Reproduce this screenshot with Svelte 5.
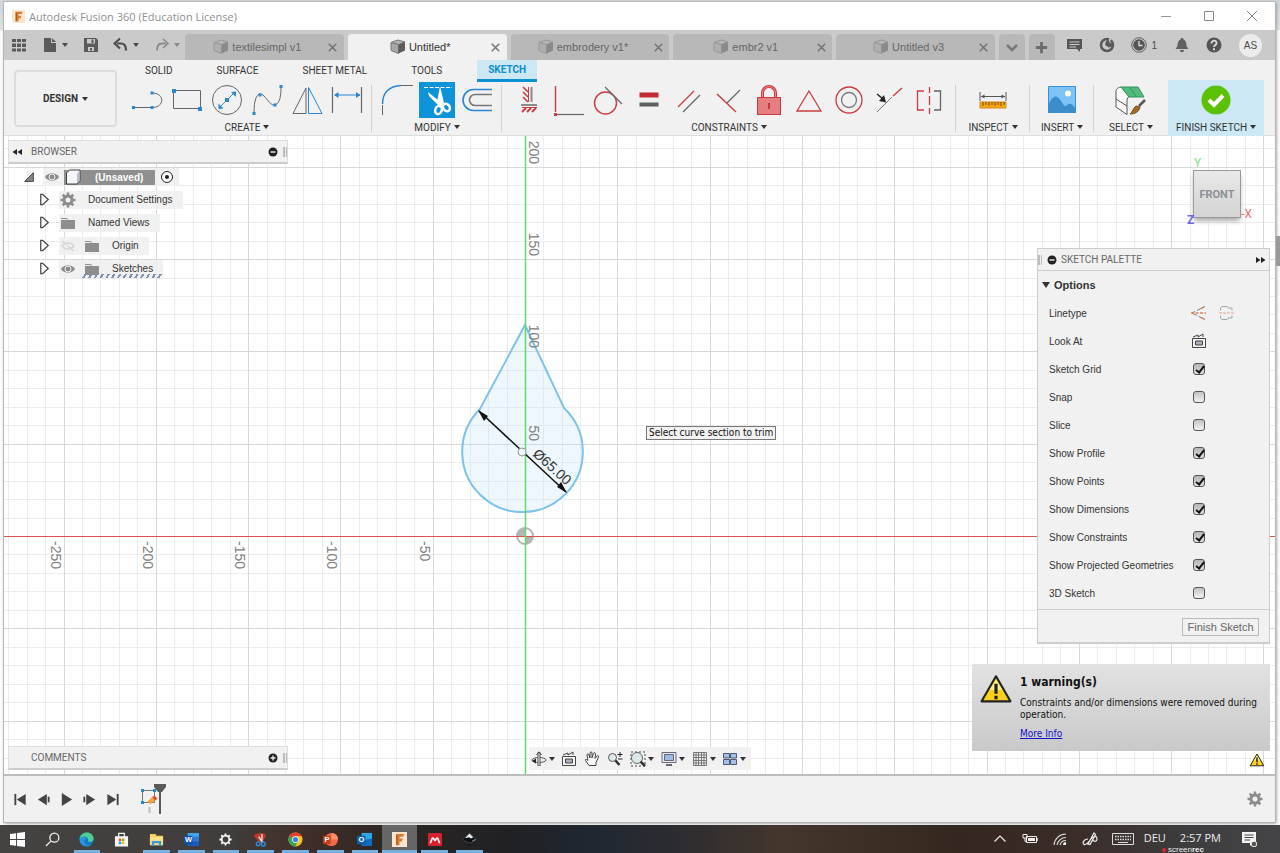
<script lang="ts">
  const B = '#2a86d1';
  const R = '#cc3b3f';
  const G = '#666';

  // inner markup per icon, drawn on a 16 or 34 unit box
  const icons: Record<string, string> = {
    line: `<path d="M3.500 24.500H22M22 10c13 0 13 14.500 0 14.500" stroke="${G}"/><path d="M2 23h3v3H2zM20.500 23h3v3h-3zM20.500 8.500h3v3h-3z" fill="${B}"/>`,
    rect: `<path d="M3.500 7.500H30.500V25.500H3.500z" stroke="${G}"/><path d="M2 6h4v4H2zM28 24h4v4h-4z" fill="${B}"/>`,
    circle: `<circle cx="17" cy="17" r="14.500" stroke="${G}"/><path d="M10 24L24 10" stroke="${B}"/><path d="M8.500 26v-5.500l5 5zM26 8.500v5.500l-5-5zM15 15h4v4h-4z" fill="${B}"/>`,
    spline: `<path d="M4 30C4 12 9 8 14 13C18 17 21 23 25 22C30 20 31 13 31 4" stroke="${G}"/><path d="M2.500 29h3v3h-3zM8.500 10.500h3v3h-3zM23.500 20.500h3v3h-3zM29.500 2h3v3h-3z" fill="${B}"/>`,
    mirror: `<path d="M3 30.500L16 5V30.500z" stroke="${G}"/><path d="M18.500 4.500V30.500H32z" stroke="${B}"/>`,
    dim: `<path d="M2.500 4V30M31.500 4V30" stroke="${G}" stroke-width="1.200"/><path d="M5 12H30" stroke="${B}"/><path d="M4 12l4.500-3v6zM30.500 12l-4.500-3v6z" fill="${B}"/>`,
    fillet: `<path d="M2.500 21C2.500 10 9 3 21 2.500" stroke="${B}" stroke-width="1.500"/><path d="M2.500 22V32M21 2.500H33" stroke="${G}"/>`,
    trim: `<path d="M4 4.500H32" stroke="#fff" stroke-dasharray="4 1.500"/><path d="M20 3L24 20L21 22L17 19zM8 9L24 22L20 25L17 21L9 13z" fill="#fff"/><g stroke="#fff" stroke-width="2.500"><ellipse cx="18.500" cy="27" rx="3.200" ry="4.200" transform="rotate(20 18.500 27)"/><ellipse cx="26.500" cy="24.500" rx="3.200" ry="4" transform="rotate(-35 26.500 24.500)"/></g>`,
    offset: `<path d="M32 6.500H13.500a10.500 10.500 0 0 0 0 21H32" stroke="${B}" stroke-width="1.600"/><path d="M32 11.500H15a5.500 5.500 0 0 0 0 11H32" stroke="#777" stroke-width="1.600"/>`,
    hv: `<path d="M16.500 4V19M10 24.500H25" stroke="${R}"/><path d="M11 4l5 5M11 9l5 5M11 14l5 5" stroke="${R}" stroke-width="1.600"/><path d="M19.500 4V19M9 22H25" stroke="#8a8a8a" stroke-width="2"/><path d="M14 25l-4 4M19 25l-4 4M24 25l-4 4" stroke="${R}" stroke-width="1.800"/>`,
    coincident: `<path d="M3.500 3V29" stroke="${R}" stroke-width="1.400"/><path d="M5 31.500H32" stroke="${G}" stroke-width="1.200"/><path d="M2 30h3v3H2z" fill="${R}"/>`,
    tangent: `<circle cx="13.500" cy="20" r="11" stroke="${R}" stroke-width="1.400"/><path d="M13 4L30 21" stroke="${G}" stroke-width="1.200"/>`,
    equal: `<path d="M7.500 12H26.500" stroke="#c32a2f" stroke-width="5"/><path d="M7.500 21.500H26.500" stroke="#5f5f5f" stroke-width="4"/>`,
    parallel: `<path d="M6 24L22 8" stroke="${R}" stroke-width="1.300"/><path d="M11 29L28 12" stroke="${G}" stroke-width="1.200"/>`,
    perp: `<path d="M5 11L24 29" stroke="${R}" stroke-width="1.400"/><path d="M15 20L28 7" stroke="${G}" stroke-width="1.200"/>`,
    lock: `<path d="M10.500 16V10a6.500 6.500 0 0 1 13 0V16" stroke="#d0383d" stroke-width="3"/><path d="M10.500 16V10a6.500 6.500 0 0 1 13 0V16" stroke="#e78a8c"/><rect x="5.500" y="14.500" width="23" height="17" fill="#e37f81" stroke="#c8383c"/><path d="M17 20V26" stroke="#c01f24" stroke-width="1.500"/>`,
    triangle: `<path d="M17 8L29 28H5z" stroke="${R}" stroke-width="1.300"/>`,
    concentric: `<circle cx="17" cy="17" r="13" stroke="${R}" stroke-width="1.300"/><circle cx="17" cy="17" r="7.500" stroke="#777a85" stroke-width="1.300"/>`,
    midpoint: `<path d="M5 29L20 14" stroke="#777"/><path d="M21 13L30 5" stroke="${R}" stroke-width="1.300"/><path d="M5 11l6 5" stroke="#222" stroke-width="1.500"/><path d="M14 19.500l-2-7.500-5 6z" fill="#222"/>`,
    symmetry: `<path d="M12 8H5.500V27H12" stroke="${R}" stroke-width="1.300"/><path d="M17.500 4V10M17.500 13V22M17.500 25V31" stroke="${R}" stroke-width="1.300"/><path d="M22 8H28.500V27H22" stroke="${G}" stroke-width="1.300"/>`,
    inspect: `<path d="M4 9V18M30 9V18M5 13.500H29" stroke="#555"/><path d="M5 13.500l3.500-2v4zM29 13.500l-3.500-2v4z" fill="#555"/><path d="M4 19H30V25H4z" fill="#f5a81c" stroke="#d98c12"/><path d="M7 19v4M10 19v3M13 19v4M16 19v3M19 19v4M22 19v3M25 19v4M28 19v3" stroke="#7a4a00"/>`,
    insert: `<path d="M3.500 3.500H30.500V29.500H3.500z" fill="#7cc3f7" stroke="#3f8fcf"/><path d="M3 22C9 11 12 11 18 21C20 25 21 22 24 21C27 20 29 24 31 26V30H3z" fill="#3b8dcb"/><circle cx="23" cy="10.500" r="3" fill="#fffde0"/>`,
    select: `<path d="M7 4C3 5 2 6 2 9V24L13 31.500V18C13 15 14 14 15 14" fill="#fbfbfb" stroke="#555"/><path d="M2 16l11 7" stroke="#555"/><path d="M7 4H24L30 14H15z" fill="#52bb7b" stroke="#2f9659"/><path d="M15.500 4L22.500 14" stroke="#2f9659"/><path d="M31 17L25 23" stroke="#555" stroke-width="2.500"/><path d="M26 24c-1 5-5 7-10 7c3-2 3-6 6-8z" fill="#a56a2c" stroke="#7a4a18"/>`,
    finish: `<circle cx="17" cy="17" r="14.500" fill="#5cc100"/><path d="M10 17l5 5 9-9.500" stroke="#fff" stroke-width="4"/>`,
    cube: `<path d="M1 3.500L8 1L15 3L8.500 5.500z" fill="#b5b5b5" stroke="#777"/><path d="M1 3.500L8.500 5.500V14.500L1 11.500z" fill="#a8a8a8" stroke="#777"/><path d="M8.500 5.500L15 3V11.500L8.500 14.500z" fill="#5d5d5d"/>`,
    apps: `<path d="M1 2h4v3H1zM6 2h4v3H6zM11 2h4v3h-4zM1 6.500h4v3.500H1zM6 6.500h4v3.500H6zM11 6.500h4v3.500h-4zM1 11.500h4v3H1zM6 11.500h4v3H6zM11 11.500h4v3h-4z" fill="#5a5a5a"/>`,
    file: `<path d="M2 1H9V6H14V15H2zM10 1L14 5H10z" fill="#5a5a5a"/>`,
    save: `<path d="M1 1H13L15 3V15H1z" fill="#5a5a5a"/><path d="M4 2H12V6.500H4zM5 10H11V14H5z" fill="#c9c9c9"/><path d="M8.500 2.500h2V6h-2zM7 11h2v2.500H7z" fill="#5a5a5a"/>`,
    undo: `<path d="M4 6.500H8c4 0 5 3 5 7" stroke="currentColor" stroke-width="2.200"/><path d="M7 1.500L1.500 6.500L7 11.500" stroke="currentColor" stroke-width="2"/>`,
    redo: `<path d="M12 6.500H8c-4 0-5 3-5 7" stroke="currentColor" stroke-width="1.800"/><path d="M9 2L14 6.500L9 11" stroke="currentColor" stroke-width="1.600"/>`,
    close: `<path d="M4 4l8 8M12 4l-8 8" stroke="#707070" stroke-width="1.500"/>`,
    down: `<path d="M3 6l5 5 5-5" stroke="#777" stroke-width="2.500"/>`,
    plus: `<path d="M8 2V14M2 8H14" stroke="#6c6c6c" stroke-width="3"/>`,
    chat: `<path d="M1 2H16V12H14V15L11 12H1z" fill="#555"/><path d="M3.500 5H13.500M3.500 7.500H13.500M3.500 10H10" stroke="#ccc"/>`,
    extensions: `<circle cx="8" cy="8" r="6" stroke="#5a5a5a" stroke-width="2.500"/><path d="M8 6L13 0" stroke="#cacaca" stroke-width="2"/><path d="M6 8l1-4 3-2v3l2 1.500 2-1-1 4-3 1z" fill="#5a5a5a"/>`,
    clock: `<circle cx="8" cy="8" r="7.300" stroke="#606060"/><circle cx="8" cy="8" r="5.800" fill="#555"/><path d="M8 4V8.500H11.500" stroke="#ddd" stroke-width="1.300"/>`,
    bell: `<path d="M8 1c1 0 1.500.5 1.500 1.500C12 3.500 12.500 6 12.500 9L14.500 12H1.500L3.500 9c0-3 .5-5.500 3-6.500C6.500 1.500 7 1 8 1z" fill="#606060"/><path d="M6 13h4c0 3-4 3-4 0z" fill="#606060"/>`,
    help: `<circle cx="8" cy="8" r="7.500" fill="#555"/><path d="M5.500 6.500c0-4 5.500-3.500 5 0C10.500 8 8 8 8 10" stroke="#ddd" stroke-width="1.800"/><path d="M7 11.300h2v2H7z" fill="#ddd"/>`,
    eye: `<path d="M1 8C4 3 12 3 15 8C12 13 4 13 1 8z" fill="#8b8b8b"/><circle cx="8" cy="8" r="3" stroke="#f1f1f1"/>`,
    eyeoff: `<path d="M2 8C5 4 11 4 14 8C11 12 5 12 2 8zM2 3L14 13" stroke="#d5d5d5" stroke-width="1.500"/>`,
    folder: `<path d="M1 3H7L8 5H15V14H1z" fill="#8e8e8e"/><path d="M1 4.500H7" stroke="#eee"/>`,
    gear: `<circle cx="8" cy="8" r="4" stroke="#8c8c8c" stroke-width="3"/><path d="M8 .5V3M8 13V15.500M.5 8H3M13 8H15.500M2.700 2.700L4.500 4.500M11.500 11.500l1.800 1.800M2.700 13.300L4.500 11.500M11.500 4.500l1.800-1.800" stroke="#8c8c8c" stroke-width="2.500"/>`,
    component: `<path d="M1.500 4L4.500 1H15V11.500L12 15H1.500z" fill="#f4f6fa" stroke="#444"/><path d="M12 4.500l2.500-2.500v9l-2.500 3z" fill="#b9bec8"/>`,
    radio: `<circle cx="8" cy="8" r="5.500" stroke="#222" fill="#fff"/><circle cx="8" cy="8" r="2" fill="#222"/>`,
    expand: `<path d="M4 2.500H6L12 8L6 13.500H4z" fill="#fafafa" stroke="#444" stroke-width="1.300"/>`,
    expanded: `<path d="M3 13L13 3V13z" fill="#888" stroke="#333"/>`,
    minus: `<circle cx="8" cy="8" r="4.500" fill="#222"/><path d="M5.500 8H10.500" stroke="#eee" stroke-width="1.400"/>`,
    add: `<circle cx="8" cy="8" r="4.500" fill="#222"/><path d="M5.500 8H10.500M8 5.500V10.500" stroke="#eee" stroke-width="1.300"/>`,
    rewind: `<path d="M8 5V11L3.500 8zM13 5V11L8.500 8z" fill="#222"/>`,
    forward: `<path d="M3 5V11L7.500 8zM8 5V11L12.500 8z" fill="#222"/>`,
    construction: `<path d="M14 1.500L1 8L14 14.500" stroke="#777" stroke-dasharray="9 2"/><path d="M0 8H15M10 3.500l4-2M10 12.500l4 2" stroke="#d9824f" stroke-dasharray="3 1.500" stroke-width="1.300"/>`,
    centerline: `<path d="M2.500 5.500V3L4 1.500H9L10 3H14V5.500M2.500 10.500V13L4 14.500H9L10 13H14V10.500" stroke="#a5a5a5"/><path d="M1 8H16" stroke="#e3a58a" stroke-dasharray="3 1"/>`,
    lookat: `<path d="M1.500 5.500H14.500V14.500H1.500z" stroke="#444" fill="#f8f8f8"/><path d="M4.500 8H11.500V12H4.500z" stroke="#444" fill="#aab0bc"/><path d="M2 4L7 2V4L12 1V4" stroke="#444"/>`,
    orbit: `<ellipse cx="8" cy="9" rx="7" ry="2.500" stroke="#555"/><path d="M8 1.500V15" stroke="#444" stroke-width="3"/><path d="M8 2V14.500" stroke="#fff"/><path d="M5.500 4L8 .8L10.500 4" stroke="#444"/><path d="M1 10l4-2.500v5z" fill="#222"/>`,
    pan: `<path d="M5 14.500L1.500 9.500C1 8 2.500 8 4 9.500L3 4c0-1.500 1.500-1.500 2 0L6 7V2c0-1.500 2-1.500 2 0V7L9.500 2.500c.5-1.500 2-1 2 .5L11 7.500L13 5c1-1 2 0 1.500 1L12 11.500V14.500z" fill="#fafafa" stroke="#444"/>`,
    zoom: `<circle cx="5.500" cy="6.500" r="4" fill="#dce9ea" stroke="#555"/><path d="M8.500 9.500L12.500 14" stroke="#333" stroke-width="2.500"/><path d="M13 1V6M10.500 3.500H15.500M11 8H15.500" stroke="#222"/>`,
    zoomwin: `<path d="M1 1H15V15H1z" stroke="#444" stroke-dasharray="2 2"/><circle cx="7" cy="7" r="5.500" fill="#dce9ea" stroke="#666"/><path d="M10.500 10.500L15 15" stroke="#333" stroke-width="2.500"/>`,
    display: `<path d="M1 1.500H15V11.500H1z" fill="#e8eaf0" stroke="#667"/><path d="M3.500 3.500H12.500V9.500H3.500z" fill="#9dbbe8" stroke="#667"/><path d="M5 14H11" stroke="#667" stroke-width="2"/>`,
    grid: `<path d="M1.500 1.500H14.500V14.500H1.500zM4 1V15M6.500 1V15M9.500 1V15M12 1V15M1 4H15M1 6.500H15M1 9.500H15M1 12H15" stroke="#777"/>`,
    views: `<path d="M1.500 2.500H7.500V7H1.500zM8.500 2.500H14.500V7H8.500zM1.500 8.500H7.500V13.500H1.500zM8.500 8.500H14.500V13.500H8.500z" fill="#a9c0e6" stroke="#4a5a78"/>`,
    warn: `<path d="M8 2L14.800 13.800H1.200z" fill="#fbd01f" stroke="#222" stroke-linejoin="round"/><path d="M8 3.500L11 8.500H5z" fill="#fdf08a"/><path d="M8 5.500V10.200M8 11.200V12.800" stroke="#222" stroke-width="1.500"/>`,
    first: `<path d="M2.500 2V14" stroke="#444" stroke-width="2"/><path d="M13.500 2V14L4 8z" fill="#444"/>`,
    prev: `<path d="M11.500 2V14L2 8z" fill="#444"/><path d="M13.500 5V11" stroke="#444" stroke-width="2"/>`,
    play: `<path d="M3 1L14 8L3 15z" fill="#444"/>`,
    next: `<path d="M4.500 2V14L14 8z" fill="#444"/><path d="M2.500 5V11" stroke="#444" stroke-width="2"/>`,
    last: `<path d="M2.500 2V14L12 8z" fill="#444"/><path d="M13.500 2V14" stroke="#444" stroke-width="2"/>`,
    win: `<path d="M0 2.200L6.500 1.300V7.500H0zM7.500 1.100L16 0V7.500H7.500zM0 8.500H6.500V14.700L0 13.800zM7.500 8.500H16V16L7.500 14.900z" fill="#fff"/>`,
    search: `<circle cx="10" cy="6" r="4.800" stroke="#eee" stroke-width="1.400"/><path d="M6.500 9.500L1 15" stroke="#eee" stroke-width="1.400"/>`,
    edge: `<circle cx="8" cy="8" r="7.500" fill="#1479c9"/><path d="M.6 8C1 2 6 .5 9 .6c5 .4 7 5 6.500 7.400C15 11 10 11 9.500 9.500C11 7 8 4.500 5 5C2.500 5.500 1 7 .6 8z" fill="#4dcf8e"/><path d="M.6 7C3 4 8 4 9 7c-3-.5-4 2-3 4.500c1 2.500 4 3.500 7 2C9 17 .5 15.500.6 7z" fill="#2498df"/>`,
    store: `<path d="M1 4.500H15V15.500H1z" fill="#f5f5f5"/><path d="M5 5V1.500H11V5" stroke="#f5f5f5" stroke-width="1.300"/><path d="M5 7h2.700v2.700H5z" fill="#f05022"/><path d="M8.300 7H11v2.700H8.300z" fill="#7fba00"/><path d="M5 10.300h2.700V13H5z" fill="#00a4ef"/><path d="M8.300 10.300H11V13H8.300z" fill="#ffb900"/>`,
    explorer: `<path d="M1 2H7L8 4H15V14H1z" fill="#f8cf59"/><path d="M1 5.500H15V14H1z" fill="#fbdf86"/><path d="M3 15V9.500H13V15H10.500V12H5.500V15z" fill="#3f96d8"/>`,
    word: `<rect x="4" y="1" width="12" height="14" rx="1" fill="#2b7cd3"/><path d="M4 1H16V5H4z" fill="#41a5ee"/><path d="M4 10H16V15H4z" fill="#185abd"/><rect x="0" y="4" width="9" height="9" rx="1" fill="#1450a5"/><text x="1" y="11" font-size="8" font-weight="700" fill="#fff">W</text>`,
    settings: `<circle cx="8" cy="8" r="4" stroke="#fff" stroke-width="1.800"/><path d="M8 1.500V4M8 12V14.500M1.500 8H4M12 8H14.500M3.500 3.500L5 5M11 11l1.500 1.500M3.500 12.500L5 11M11 5l1.500-1.500" stroke="#fff" stroke-width="2"/>`,
    snip: `<path d="M1 4C3 0 13 0 14 4L10 11H7z" fill="#c23a25"/><path d="M9.500 2V10M6 5L10 11" stroke="#ddd" stroke-width="1.500"/><circle cx="5.500" cy="12.500" r="2" stroke="#2f8fd8" stroke-width="1.500"/><circle cx="11" cy="13" r="2" stroke="#2f8fd8" stroke-width="1.500"/>`,
    chrome: `<circle cx="8" cy="8" r="7.500" fill="#f3c51b"/><path d="M8 8L1.500 4.200A7.500 7.500 0 0 1 14.500 4.500H8z" fill="#e2412f"/><path d="M8 8L1.500 4.200A7.500 7.500 0 0 0 7.500 15.500L11 9.500z" fill="#31a552"/><circle cx="8" cy="8" r="3.600" fill="#fff"/><circle cx="8" cy="8" r="2.800" fill="#3f7de8"/>`,
    ppt: `<circle cx="9" cy="8" r="7" fill="#ed6c47"/><path d="M9 1a7 7 0 0 1 7 7H9z" fill="#ff8f6b"/><rect x="0" y="4" width="8" height="9" rx="1" fill="#c43e1c"/><text x="1.500" y="11" font-size="8" font-weight="700" fill="#fff">P</text>`,
    outlook: `<rect x="5" y="1" width="11" height="12" fill="#28a8ea"/><path d="M5 9l11-2v8H5z" fill="#0f6cbd"/><rect x="0" y="4" width="9" height="9" rx="1" fill="#0f5fa8"/><text x="1.500" y="11" font-size="8" font-weight="700" fill="#fff">O</text>`,
    fusion: `<rect width="16" height="16" fill="#fbe5d0"/><path d="M4.500 2H13L12 5H8V7H11.500L10.500 10H8V14H4.500z" fill="#e07b28"/><path d="M4.500 2L6 4V13L4.500 14z" fill="#a85a1c"/>`,
    mendeley: `<rect x="1" y="1" width="15" height="14" rx="1" fill="#d5202e"/><path d="M3 11.500c2 0 1.500-5 3-5S8 9 8.500 9S9.500 6.500 11 6.500s1 5 3 5" stroke="#fff" stroke-width="1.800"/>`,
    inkscape: `<path d="M8 1L15 8C15 9.500 11 9 11 10.500S8 12 6 11S2 9.500 1 8z" fill="#0b0d12" stroke="#666" stroke-width=".6"/><path d="M8 1.500L12 5.500L9.500 7L7.500 5.500L4.500 6.500L3.500 6z" fill="#e6eef2"/><path d="M11 9.500L14.500 8" stroke="#8fa6b5"/><path d="M6 13.500C8 12.500 10 13.500 8 14.500z" fill="#0b0d12"/>`,
    chevron: `<path d="M2.500 10.500L8 5L13.500 10.500" stroke="#eee" stroke-width="1.200"/>`,
    battery: `<path d="M4.500 5.500H14.500V11.500H4.500z" stroke="#eee"/><path d="M6 7H13V10H6z" fill="#eee"/><path d="M15 7V10" stroke="#eee" stroke-width="1.500"/><path d="M1 3.500H5V7H1zM3 7V10.500H4.500" stroke="#eee"/>`,
    wifi: `<path d="M2 14A12 12 0 0 1 14 3M5 14A9 9 0 0 1 14 6.500M8 14a6 6 0 0 1 6-4.500" stroke="#ddd" stroke-width="1.100"/><path d="M11 14c0-2 1-3 3-3v3z" fill="#eee"/>`,
    pen: `<path d="M6 13L12 2L13.500 3.500L8 13.500zM6 8C2 8 0 12 2 13.500C4 14.500 6 12 9 8S15 5 15 8s-3 3-4 1" stroke="#eee" stroke-width="1.200"/>`,
    note: `<path d="M1 1H15V12H12L9 15V12H1z" fill="#f2f2f2"/><path d="M3.500 4H12.500M3.500 6.500H12.500M3.500 9H9" stroke="#444"/><circle cx="13" cy="13" r="2.800" fill="#555" stroke="#eee"/>`,
  };

  const tabs = [
    { id: 1, name: 'textilesimpl v1' },
    { id: 2, name: 'Untitled*' },
    { id: 3, name: 'embrodery v1*' },
    { id: 4, name: 'embr2 v1' },
    { id: 5, name: 'Untitled v3' },
  ];
  let activeTab = $state(2);

  const workspaces = ['SOLID', 'SURFACE', 'SHEET METAL', 'TOOLS', 'SKETCH'];
  let activeWorkspace = $state('SKETCH');

  const groups = [
    { name: 'CREATE', tools: ['line', 'rect', 'circle', 'spline', 'mirror', 'dim'] },
    { name: 'MODIFY', tools: ['fillet', 'trim', 'offset'] },
    {
      name: 'CONSTRAINTS',
      tools: ['hv', 'coincident', 'tangent', 'equal', 'parallel', 'perp', 'lock', 'triangle', 'concentric', 'midpoint', 'symmetry'],
    },
    { name: 'INSPECT', tools: ['inspect'] },
    { name: 'INSERT', tools: ['insert'] },
    { name: 'SELECT', tools: ['select'] },
    { name: 'FINISH SKETCH', tools: ['finish'] },
  ];
  let activeTool = $state('trim');

  const nodes = [
    { name: 'Document Settings', icons: ['gear'] },
    { name: 'Named Views', icons: ['folder'] },
    { name: 'Origin', icons: ['eyeoff', 'folder'] },
    { name: 'Sketches', icons: ['eye', 'folder'], marked: true },
  ];

  let options = $state([
    { id: 'grid', label: 'Sketch Grid', on: true },
    { id: 'snap', label: 'Snap', on: false },
    { id: 'slice', label: 'Slice', on: false },
    { id: 'profile', label: 'Show Profile', on: true },
    { id: 'points', label: 'Show Points', on: true },
    { id: 'dimensions', label: 'Show Dimensions', on: true },
    { id: 'constraints', label: 'Show Constraints', on: true },
    { id: 'projected', label: 'Show Projected Geometries', on: true },
    { id: 'sketch3d', label: '3D Sketch', on: false },
  ]);

  const nav = [
    { icon: 'orbit', menu: true },
    { icon: 'lookat', menu: false },
    { icon: 'pan', menu: false },
    { icon: 'zoom', menu: false },
    { icon: 'zoomwin', menu: true },
    { icon: 'display', menu: true },
    { icon: 'grid', menu: true },
    { icon: 'views', menu: true },
  ];

  const apps = [
    { icon: 'win', open: false },
    { icon: 'search', open: false },
    { icon: 'edge', open: true },
    { icon: 'store', open: false },
    { icon: 'explorer', open: true },
    { icon: 'word', open: true },
    { icon: 'settings', open: true },
    { icon: 'snip', open: true },
    { icon: 'chrome', open: true },
    { icon: 'ppt', open: true },
    { icon: 'outlook', open: true },
    { icon: 'fusion', open: true },
    { icon: 'mendeley', open: true },
    { icon: 'inkscape', open: true },
  ];

  // one grid cell is 10 mm
  const cell = 18.46;
  const steps = Array.from({ length: 201 }, (_, i) => i - 100);
  const xLabels = [-250, -200, -150, -100, -50];
  const yLabels = [50, 100, 150, 200];
  const pos = (n: number) => Math.round(n * cell);
</script>

{#snippet icon(name: string, size = 16, box = 16)}
  <svg width={size} height={size} viewBox="0 0 {box} {box}" fill="none" aria-hidden="true">{@html icons[name]}</svg>
{/snippet}

<div class="desktop">
  <div class="window">
    <header class="titlebar">
      {@render icon('fusion', 13)}
      <span>Autodesk Fusion 360 (Education License)</span>
      <div class="winbuttons">
        <button aria-label="Minimize"><svg width="12" height="12"><path d="M1 6.500H11" stroke="#999" /></svg></button>
        <button aria-label="Maximize"><svg width="12" height="12"><path d="M1.500 1.500H10.500V10.500H1.500z" fill="none" stroke="#888" /></svg></button>
        <button aria-label="Close"><svg width="12" height="12"><path d="M1 1L11 11M11 1L1 11" stroke="#888" /></svg></button>
      </div>
    </header>

    <div class="tabbar">
      <div class="quick">
        <button aria-label="Data panel">{@render icon('apps')}</button>
        <button aria-label="File">{@render icon('file')}<i class="caret"></i></button>
        <button aria-label="Save">{@render icon('save')}</button>
        <button aria-label="Undo">{@render icon('undo')}<i class="caret"></i></button>
        <button aria-label="Redo" class="dim">{@render icon('redo')}<i class="caret"></i></button>
      </div>
      <div class="tabs">
        {#each tabs as tab (tab.id)}
          <div class="tab" class:active={tab.id === activeTab}>
            <button class="tab-name" onclick={() => (activeTab = tab.id)}>
              {@render icon('cube')}
              {tab.name}
            </button>
            <button class="tab-close" aria-label="Close {tab.name}">{@render icon('close', 15)}</button>
          </div>
        {/each}
        <button class="tab small" aria-label="All tabs">{@render icon('down')}</button>
        <button class="tab small" aria-label="New tab">{@render icon('plus', 15)}</button>
      </div>
      <div class="account">
        <button aria-label="Comments">{@render icon('chat')}</button>
        <button aria-label="Extensions">{@render icon('extensions')}</button>
        <button aria-label="Job status" class="jobs">{@render icon('clock')}1</button>
        <button aria-label="Notifications">{@render icon('bell')}</button>
        <button aria-label="Help">{@render icon('help')}</button>
        <button class="avatar">AS</button>
      </div>
    </div>

    <div class="ribbon">
      <button class="design">DESIGN <i class="caret"></i></button>
      <div class="panels">
        <nav class="workspaces">
          {#each workspaces as name}
            <button class:current={name === activeWorkspace} onclick={() => (activeWorkspace = name)}>{name}</button>
          {/each}
        </nav>
        <div class="groups">
          {#each groups as group}
            <div
              class="group"
              class:finish={group.name === 'FINISH SKETCH'}
              class:single={group.tools.length === 1}
              class:wide={group.tools.length > 6}
            >
              <div class="tools">
                {#each group.tools as tool}
                  <button class="tool" class:on={tool === activeTool} aria-label={tool} onclick={() => (activeTool = tool)}>
                    {@render icon(tool, 34, 34)}
                  </button>
                {/each}
              </div>
              <button class="group-name">{group.name} <i class="caret"></i></button>
            </div>
          {/each}
        </div>
      </div>
    </div>

    <main class="canvas">
      <svg class="sketch" aria-label="Sketch">
        <g transform="translate(521 400)">
          {#each steps as n}
            <path class="grid-line" d="M{pos(n) + 0.5} -2000V2000M-2000 {pos(n) + 0.5}H2000" />
          {/each}
          {#each steps.filter((n) => n % 5 === 0) as n}
            <path class="grid-line major" d="M{pos(n) + 0.5} -2000V2000M-2000 {pos(n) + 0.5}H2000" />
          {/each}
          <circle cx="0" cy="0" r="8" fill="#fff" stroke="#b5b5b5" stroke-width="2" />
          <path d="M0 0V-8A8 8 0 0 0 -8 0zM0 0V8A8 8 0 0 0 8 0z" fill="#b5b5b5" />
          <path class="profile" d="M0 -211L-45 -127A60.300 60.300 0 1 0 39 -128z" />
          <path d="M-2000 0.500H2000" stroke="#d9534f" />
          <path d="M0.500 -2000V2000" stroke="#5fdb68" stroke-width="1.500" />
          {#each xLabels as v}
            <text class="scale" transform="translate({pos(v / 10) - 13} 5) rotate(90)">{v}</text>
          {/each}
          {#each yLabels as v}
            <text class="scale" text-anchor="end" transform="translate(4 {-pos(v / 10) - 3}) rotate(90)">{v}</text>
          {/each}
          <path d="M-46 -125L41 -44" stroke="#111" stroke-width="1.500" />
          <path d="M-47 -126L-37 -120L-41 -115zM42 -43L32 -49L36 -54z" fill="#111" />
          <circle cx="-3" cy="-84" r="4" fill="#eef7fd" stroke="#999" />
          <text class="dimension" transform="translate(7 -81) rotate(42)">Ø65.00</text>
        </g>
      </svg>

      <section class="browser">
        <div class="bar">
          <button aria-label="Collapse browser">{@render icon('rewind')}</button>
          <span>BROWSER</span>
          <button aria-label="Hide browser">{@render icon('minus')}</button>
          <i class="grip"></i>
        </div>
        <ul class="tree">
          <li class="root">
            {@render icon('expanded', 14)}
            <div class="node">
              {@render icon('eye')}
              <button class="doc">{@render icon('component')}<b>(Unsaved)</b></button>
              {@render icon('radio')}
            </div>
          </li>
          {#each nodes as node}
            <li>
              {@render icon('expand', 15)}
              <button class="node" class:marked={node.marked}>
                {#each node.icons as name}
                  {@render icon(name)}
                {/each}
                <span>{node.name}</span>
              </button>
            </li>
          {/each}
        </ul>
      </section>

      <div class="hint">Select curve section to trim</div>

      <div class="viewcube">
        <span class="y">Y</span>
        <button>FRONT</button>
        <span class="x">-X</span>
        <span class="z">Z</span>
      </div>

      <section class="palette">
        <div class="palette-head">
          <i class="grip"></i>
          <button aria-label="Collapse palette">{@render icon('minus')}</button>
          <span>SKETCH PALETTE</span>
          <button aria-label="Dock palette">{@render icon('forward')}</button>
        </div>
        <div class="palette-body">
          <h2><i class="caret"></i>Options</h2>
          <div class="option">
            <span>Linetype</span>
            <button aria-label="Construction">{@render icon('construction')}</button>
            <button aria-label="Centerline">{@render icon('centerline')}</button>
          </div>
          <div class="option">
            <span>Look At</span>
            <button aria-label="Look at">{@render icon('lookat')}</button>
          </div>
          {#each options as option (option.id)}
            <div class="option">
              <label for={option.id}>{option.label}</label>
              <input type="checkbox" id={option.id} bind:checked={option.on} />
            </div>
          {/each}
        </div>
        <div class="palette-foot">
          <button>Finish Sketch</button>
        </div>
      </section>

      <section class="warning">
        {@render icon('warn', 34)}
        <div>
          <h3>1 warning(s)</h3>
          <p>Constraints and/or dimensions were removed during operation.</p>
          <a href="#info">More Info</a>
        </div>
      </section>
      <button class="warn-badge" aria-label="Warnings">{@render icon('warn')}</button>

      <div class="bar comments">
        <span>COMMENTS</span>
        <button aria-label="Show comments">{@render icon('add')}</button>
        <i class="grip"></i>
      </div>

      <div class="navbar">
        {#each nav as item}
          <button aria-label={item.icon}>{@render icon(item.icon)}{#if item.menu}<i class="caret"></i>{/if}</button>
        {/each}
      </div>
    </main>

    <footer class="timeline">
      {#each ['first', 'prev', 'play', 'next', 'last'] as name}
        <button aria-label={name}>{@render icon(name, 15)}</button>
      {/each}
      <svg class="feature" width="26" height="32" fill="none" aria-hidden="true">
        <path d="M2.500 7.500H14.500V19.500H2.500z" stroke="#777" />
        <path d="M1 6h3v3H1zM13 6h3v3h-3zM1 18h3v3H1z" fill="#2a86d1" />
        <path d="M9 20l6-6" stroke="#f2a33c" stroke-width="4" />
        <path d="M14 16l2-2" stroke="#dd4b3e" stroke-width="4" />
        <path d="M9.500 24V30" stroke="#bbb" stroke-width="2" />
        <path d="M14 1H26V4L22 9H18L14 4z" fill="#5a5a5a" />
        <path d="M20 5V31" stroke="#5a5a5a" stroke-width="2" />
      </svg>
      <button class="prefs" aria-label="Preferences">{@render icon('gear')}</button>
    </footer>
  </div>

  <i class="scroll-thumb"></i>

  <div class="taskbar">
    <nav class="apps">
      {#each apps as app}
        <button class:open={app.open} class:focused={app.icon === 'fusion'} aria-label={app.icon}>{@render icon(app.icon, 15)}</button>
      {/each}
    </nav>
    <div class="tray">
      <button aria-label="Hidden icons">{@render icon('chevron')}</button>
      <button aria-label="Battery">{@render icon('battery')}</button>
      <button aria-label="Network">{@render icon('wifi')}</button>
      <button aria-label="Pen">{@render icon('pen')}</button>
      <button aria-label="Touch keyboard">
        <svg width="22" height="14" fill="none" stroke="#ddd">
          <path d="M.5 1.500H21.500V12.500H.5z" />
          <path d="M3 4.500H19M3 7.500H19" stroke-dasharray="1.500 1" stroke-width="1.500" />
          <path d="M6 10.500H16" />
        </svg>
      </button>
      <button class="lang">DEU</button>
      <button class="time">2:57 PM</button>
      <button aria-label="Action center">{@render icon('note')}</button>
      <span class="recorder"><i></i>screen<b>rec</b></span>
    </div>
  </div>
</div>

<style>
  :global(body) {
    margin: 0;
    font-family: 'Liberation Sans', Arial, sans-serif;
    font-size: 10px;
    color: #333;
  }

  * {
    box-sizing: border-box;
  }

  button {
    background: none;
    border: none;
    padding: 0;
    margin: 0;
    font: inherit;
    color: inherit;
    display: flex;
    align-items: center;
    justify-content: center;
  }

  svg {
    display: block;
    flex-shrink: 0;
  }

  .caret {
    display: inline-block;
    border: 3px solid transparent;
    border-top: 4px solid currentColor;
    border-bottom: none;
    flex-shrink: 0;
  }

  .desktop {
    min-height: 100vh;
    display: flex;
    flex-direction: column;
    background: linear-gradient(#d0d5d9 0, #dde2e5 30px, #fafafa 31px);
    position: relative;
  }

  .window {
    flex: 1;
    display: flex;
    flex-direction: column;
    margin: 2px 5px 3px 4px;
    box-shadow: 0 0 0 1px #b5b5b5, 1px 1px 3px #777;
    background: #f1f1f1;
  }

  .titlebar {
    height: 28px;
    background: #fff;
    display: flex;
    align-items: center;
    gap: 4px;
    padding-left: 8px;
    font-family: 'Open Sans', sans-serif;
    font-size: 11px;
    color: #8f8f8f;
  }

  .winbuttons {
    margin-left: auto;
    padding-right: 2px;
    display: flex;
  }

  .winbuttons button {
    width: 43px;
    height: 28px;
  }

  .tabbar {
    height: 30px;
    background: #cacaca;
    display: flex;
    align-items: center;
    color: #4a4a4a;
  }

  .quick {
    width: 181px;
    display: flex;
    align-items: center;
    justify-content: space-between;
    padding: 0 5px 0 7px;
  }

  .quick button {
    gap: 4px;
  }

  .quick .dim {
    color: #8a8a8a;
  }

  .tabs {
    flex: 1;
    align-self: flex-end;
    display: flex;
    gap: 4px;
  }

  .tab {
    flex: 1;
    height: 26px;
    background: #b8b8b8;
    border-radius: 4px 4px 0 0;
    display: flex;
    align-items: center;
    font-size: 11px;
    color: #666;
    min-width: 0;
  }

  .tab.active {
    background: #f1f1f1;
    color: #333;
  }

  .tab:not(.active) .tab-name :global(svg) {
    opacity: 0.5;
  }

  .tab.small {
    flex: 0 0 26px;
  }

  .tab-name {
    flex: 1;
    gap: 3px;
    height: 26px;
    padding-left: 8px;
    white-space: nowrap;
  }

  .tab-close {
    width: 22px;
  }

  .account {
    width: 220px;
    display: flex;
    align-items: center;
    justify-content: space-between;
    padding: 0 13px 0 11px;
  }

  .jobs {
    gap: 4px;
  }

  .avatar {
    width: 23px;
    height: 23px;
    border-radius: 50%;
    background: #ececec;
  }

  .ribbon {
    height: 76px;
    display: flex;
    font-family: Roboto, sans-serif;
    border-bottom: 1px solid #ddd;
  }

  .design {
    width: 103px;
    height: 57px;
    margin: 10px 0 0 10px;
    border: 2px solid #dcdcdc;
    border-radius: 4px;
    font-weight: 700;
    gap: 4px;
  }

  .panels {
    flex: 1;
    margin-left: 5px;
    display: flex;
    flex-direction: column;
  }

  .workspaces {
    height: 20px;
    display: flex;
    align-items: flex-start;
    gap: 44px;
    padding-left: 23px;
  }

  .workspaces button {
    height: 20px;
  }

  .workspaces .current {
    height: 22px;
    padding: 0 11px;
    margin-left: -9px;
    background: #cce8f4;
    border-bottom: 3px solid #0d90d0;
    color: #0d8dcc;
    font-weight: 700;
  }

  .groups {
    flex: 1;
    display: flex;
  }

  .group {
    padding: 2px 5px 0;
    display: flex;
    flex-direction: column;
    align-items: center;
    position: relative;
  }

  .group:not(.finish)::after {
    content: '';
    position: absolute;
    right: 0;
    top: 5px;
    bottom: 4px;
    border-right: 1px solid #d2d2d2;
  }

  .group.wide {
    padding: 2px 7px 0;
  }

  .group.single {
    padding: 2px 8px 0;
    min-width: 74px;
  }

  .group.single:nth-child(5) {
    min-width: 64px;
  }

  .group:nth-child(6)::after {
    display: none;
  }

  .group.finish {
    background: #cce8f4;
    min-width: 96px;
  }

  .tools {
    display: flex;
  }

  .tool {
    width: 40px;
    height: 36px;
  }

  .tool.on {
    width: 36px;
    margin: 0 2px;
    background: #0d93d8;
  }

  .group-name {
    height: 18px;
    gap: 3px;
    white-space: nowrap;
  }

  .canvas {
    flex: 1;
    min-height: 560px;
    position: relative;
    background: #fff;
    overflow: hidden;
  }

  .sketch {
    position: absolute;
    inset: 0;
    width: 100%;
    height: 100%;
  }

  .grid-line {
    stroke: #ececec;
  }

  .grid-line.major {
    stroke: #d8d8d8;
  }

  .profile {
    fill: rgba(190, 226, 248, 0.28);
    stroke: #7cc3ea;
    stroke-width: 2px;
  }

  .scale {
    font-size: 14px;
    fill: #808080;
  }

  .dimension {
    font-size: 14px;
    fill: #333;
  }

  .browser {
    position: absolute;
    left: 4px;
    top: 4px;
    width: 280px;
  }

  .bar {
    height: 24px;
    background: #f1f1f1;
    border: 1px solid #ddd;
    border-bottom: 2px solid #ccc;
    display: flex;
    align-items: center;
    font-family: Roboto, sans-serif;
    color: #666;
  }

  .bar span {
    margin: 0 auto 0 6px;
  }

  .bar .grip {
    margin-left: 2px;
  }

  .grip {
    width: 4px;
    height: 10px;
    border: 1px solid #bbb;
    border-width: 0 1px 0 2px;
  }

  .comments {
    position: absolute;
    left: 4px;
    bottom: 4px;
    width: 280px;
  }

  .comments span {
    margin-left: 22px;
  }

  .tree {
    list-style: none;
    margin: 2px 0 0;
    padding: 0;
  }

  .tree li {
    display: flex;
    align-items: center;
    gap: 7px;
    height: 23px;
    padding-left: 29px;
  }

  .tree .root {
    height: 22px;
    padding-left: 14px;
  }

  .node {
    height: 18px;
    background: rgba(240, 240, 240, 0.9);
    gap: 8px;
    padding: 0 10px 0 1px;
  }

  .node span {
    padding-left: 4px;
  }

  .root .node {
    display: flex;
    align-items: center;
    gap: 4px;
    padding: 0 4px 0 1px;
  }

  .doc {
    height: 15px;
    width: 91px;
    background: #8f8f8f;
    color: #fff;
    justify-content: flex-start;
    gap: 14px;
    padding-left: 1px;
  }

  .marked {
    position: relative;
  }

  .marked::after {
    content: '';
    position: absolute;
    left: 22px;
    right: 1px;
    bottom: 0;
    height: 4px;
    background: repeating-linear-gradient(120deg, transparent 0 3px, #7d92b5 3px 5px);
  }

  .hint {
    position: absolute;
    left: 642px;
    top: 290px;
    height: 14px;
    padding: 0 2px;
    border: 1px solid #777;
    background: #f3f3f3;
    font-family: 'DejaVu Sans Condensed', 'DejaVu Sans', sans-serif;
    font-size: 10px;
    line-height: 12px;
    color: #111;
    white-space: nowrap;
  }

  .viewcube {
    position: absolute;
    right: 34px;
    top: 34px;
    width: 48px;
    height: 48px;
    font-family: Roboto, sans-serif;
    font-size: 12px;
  }

  .viewcube button {
    width: 48px;
    height: 48px;
    border: 1px solid #999;
    background: linear-gradient(#e9e9e9, #d3d3d3);
    box-shadow: 0 4px 5px -1px #aaa;
    color: #8b9096;
    font-weight: 700;
    font-size: 11px;
  }

  .viewcube span {
    position: absolute;
  }

  .viewcube .y {
    left: 1px;
    top: -14px;
    color: #7fe887;
  }

  .viewcube .x {
    right: -11px;
    bottom: -3px;
    color: #f0696e;
  }

  .viewcube .z {
    left: -6px;
    bottom: -9px;
    color: #6a6ae6;
    font-weight: 700;
  }

  .palette {
    position: absolute;
    right: 5px;
    top: 112px;
    width: 233px;
    background: #f1f1f1;
    border: 1px solid #ccc;
    border-bottom-width: 2px;
  }

  .palette-head {
    height: 22px;
    border-bottom: 1px solid #ccc;
    display: flex;
    align-items: center;
    font-family: Roboto, sans-serif;
    color: #666;
  }

  .palette-head span {
    margin: 0 auto 0 1px;
  }

  .palette-head .grip {
    margin-right: 2px;
  }

  .palette-body {
    padding-bottom: 2px;
  }

  .palette h2 {
    height: 28px;
    margin: 0;
    padding-left: 4px;
    display: flex;
    align-items: center;
    gap: 4px;
    font-size: 11px;
  }

  .palette h2 .caret {
    border-width: 6px 4px 0;
  }

  .option {
    height: 28px;
    padding-left: 11px;
    display: grid;
    grid-template-columns: 142px 16px 27px;
    align-items: center;
  }

  .option > :first-child {
    white-space: nowrap;
  }

  .option > :nth-child(3) {
    justify-self: end;
  }

  .option input {
    appearance: none;
    width: 12px;
    height: 12px;
    margin: 0;
    justify-self: center;
    border: 1px solid #555;
    border-radius: 3px;
    background: linear-gradient(#c4c4c4, #f2f2f2);
    display: grid;
    place-items: center;
  }

  .option input:checked {
    background: linear-gradient(#b4b4b4, #e0e0e0);
  }

  .option input:checked::after {
    content: '';
    width: 3px;
    height: 7px;
    border: solid #111;
    border-width: 0 2px 2px 0;
    transform: rotate(38deg) translateY(-1px);
  }

  .palette-foot {
    border-top: 1px solid #ccc;
    padding: 8px 10px 6px;
    display: flex;
    justify-content: flex-end;
  }

  .palette-foot button {
    width: 77px;
    height: 18px;
    border: 1px solid #bbb;
    font-size: 11px;
    color: #666;
    white-space: nowrap;
  }

  .warning {
    position: absolute;
    right: 5px;
    bottom: 23px;
    width: 298px;
    height: 87px;
    padding: 8px 6px 0 7px;
    display: flex;
    gap: 7px;
    background: linear-gradient(#e2e2e2, #c9c9c9);
    font-family: 'DejaVu Sans Condensed', 'DejaVu Sans', sans-serif;
    font-size: 10px;
    color: #111;
  }

  .warning h3 {
    margin: 2px 0 7px;
    font-size: 12px;
    line-height: 16px;
  }

  .warning p {
    margin: 0 0 7px;
    line-height: 12px;
  }

  .warning a {
    color: #11c;
  }

  .warn-badge {
    position: absolute;
    right: 10px;
    bottom: 6px;
  }

  .navbar {
    position: absolute;
    left: 50%;
    bottom: 4px;
    transform: translateX(-50%);
    width: 222px;
    height: 23px;
    background: #f1f1f1;
    display: flex;
    align-items: center;
    justify-content: space-between;
    padding: 0 4px 0 2px;
  }

  .navbar button {
    gap: 2px;
  }

  .timeline {
    height: 48px;
    border-top: 2px solid #bdbdbd;
    display: flex;
    align-items: center;
    gap: 8px;
    padding: 0 12px 0 9px;
  }

  .timeline .feature {
    margin-left: 12px;
  }

  .prefs {
    margin-left: auto;
  }

  .scroll-thumb {
    position: absolute;
    right: 0;
    top: 236px;
    width: 4px;
    height: 30px;
    background: #999;
  }

  .taskbar {
    height: 28px;
    display: flex;
    justify-content: space-between;
    color: #eee;
    background: linear-gradient(90deg, #444342 0, #403d3b 18%, #43302a 23%, #2b2523 31%, #202124 40%, #1f2731 46%, #2c2c31 53%, #44362c 61%, #33271f 75%, #3b2d28 84%, #3d3d3f 93%, #454548);
  }

  .apps {
    width: 38%;
    display: flex;
  }

  .apps button {
    flex: 1;
    position: relative;
  }

  .apps .open::after {
    content: '';
    position: absolute;
    left: 4px;
    right: 4px;
    bottom: 0;
    height: 3px;
    background: #76b0de;
  }

  .apps .focused {
    background: #666;
  }

  .apps .focused::after {
    left: 0;
    right: 0;
  }

  .tray {
    position: relative;
    display: flex;
    align-items: center;
    gap: 14px;
    padding-right: 23px;
    font-family: 'Open Sans', sans-serif;
    font-size: 11px;
  }

  .lang,
  .time {
    padding-bottom: 3px;
  }

  .lang {
    margin-left: -4px;
  }

  .time {
    margin-right: 6px;
  }

  .recorder {
    position: absolute;
    right: 76px;
    bottom: 0;
    display: flex;
    align-items: center;
    font-family: 'Liberation Sans', Arial, sans-serif;
    font-size: 8px;
    line-height: 6px;
    white-space: nowrap;
  }

  .recorder i {
    width: 4px;
    height: 4px;
    margin-right: 2px;
    border-radius: 50%;
    background: #e0242c;
  }
</style>
